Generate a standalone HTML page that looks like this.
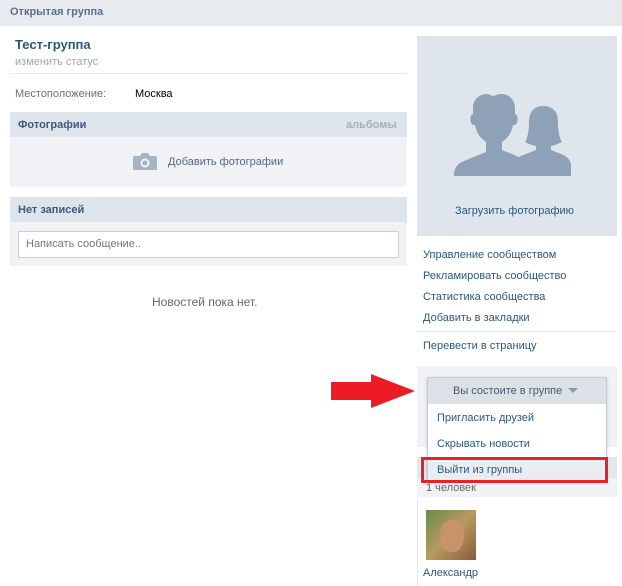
<!DOCTYPE html>
<html><head><meta charset="utf-8"><style>
*{margin:0;padding:0;box-sizing:border-box}
body{width:622px;height:586px;background:#fff;font-family:"Liberation Sans","DejaVu Sans",sans-serif;font-size:11px;color:#000;position:relative;overflow:hidden}
.a{position:absolute;white-space:nowrap}
.lnk{color:#2b587a}
</style></head><body>
<div class="a" style="left:0;top:0;width:622px;height:26px;background:#e7ebf0"></div>
<div class="a" style="left:10px;top:6px;font-weight:bold;color:#59708a">Открытая группа</div>
<div class="a" style="left:15px;top:37px;font-size:13px;font-weight:bold;color:#2b587a">Тест-группа</div>
<div class="a" style="left:15px;top:56px;color:#a0a6ad">изменить статус</div>
<div class="a" style="left:10px;top:73px;width:397px;height:1px;background:#e5e8ec"></div>
<div class="a" style="left:15px;top:88px;color:#6b6f73">Местоположение:</div>
<div class="a" style="left:135px;top:88px;color:#000">Москва</div>
<div class="a" style="left:10px;top:112px;width:397px;height:25px;background:#dee4eb"></div>
<div class="a" style="left:18px;top:119px;font-weight:bold;color:#3d5a7a">Фотографии</div>
<div class="a" style="left:346px;top:119px;font-weight:bold;color:#a3b1c2">альбомы</div>
<div class="a" style="left:10px;top:137px;width:397px;height:50px;background:#f0f2f5"></div>
<svg class="a" style="left:133px;top:152px" width="24" height="20" viewBox="0 0 24 20"><path d="M2 4h5l2-3h6l2 3h5a2 2 0 0 1 2 2v12H0V6a2 2 0 0 1 2-2z" fill="#a7b4c3"/><circle cx="12" cy="11" r="4.5" fill="#f0f2f5"/><circle cx="12" cy="11" r="2.5" fill="#a7b4c3"/></svg>
<div class="a" style="left:168px;top:156px;color:#55677d">Добавить фотографии</div>
<div class="a" style="left:10px;top:197px;width:397px;height:25px;background:#dee4eb"></div>
<div class="a" style="left:18px;top:204px;font-weight:bold;color:#3d5a7a">Нет записей</div>
<div class="a" style="left:10px;top:222px;width:397px;height:44px;background:#f0f2f5"></div>
<div class="a" style="left:18px;top:231px;width:381px;height:27px;background:#fff;border:1px solid #c9d0d8"></div>
<div class="a" style="left:26px;top:238px;color:#777">Написать сообщение..</div>
<div class="a" style="left:152px;top:295px;font-size:12px;color:#666">Новостей пока нет.</div>

<div class="a" style="left:417px;top:36px;width:200px;height:200px;background:#dfe5ec"></div>
<svg class="a" style="left:454px;top:94px" width="126" height="82" viewBox="0 0 126 82"><path d="M0 82c0-8 3-12 10-15l22-9v-10c-6-4-10-10-11-17h-2c-3-1-4-10 0-11v-6c0-9 7-14 14-14 3 0 4 2 7 2 2-1 4-2 8-2 7 0 13 6 13 14v6c4 1 3 10 0 11h-2c-1 7-5 13-11 17v8c6 3 12 4 18 8v18z" fill="#8ea1b6"/><path d="M60 82v-14c2-4 6-6 12-8l10-4v-4c-5-1-9-3-11-4 3-5 4-12 4-20 0-11 6-16 14-16 9 0 15 5 15 16 0 8 1 15 4 20-2 1-6 3-11 4v4l10 4c6 2 9 6 10 10v12z" fill="#8ea1b6"/></svg>
<div class="a" style="left:455px;top:205px;color:#2b587a">Загрузить фотографию</div>
<div class="a lnk" style="left:423px;top:249px">Управление сообществом</div>
<div class="a lnk" style="left:423px;top:270px">Рекламировать сообщество</div>
<div class="a lnk" style="left:423px;top:291px">Статистика сообщества</div>
<div class="a lnk" style="left:423px;top:312px">Добавить в закладки</div>
<div class="a" style="left:417px;top:331px;width:200px;height:1px;background:#e5e8ec"></div>
<div class="a lnk" style="left:423px;top:340px">Перевести в страницу</div>
<div class="a" style="left:417px;top:366px;width:200px;height:81px;background:#f0f2f5"></div>
<div class="a" style="left:417px;top:457px;width:200px;height:21px;background:#e2e8ee"></div>
<div class="a" style="left:417px;top:478px;width:200px;height:19px;background:#f0f2f5"></div>
<div class="a" style="left:426px;top:482px;color:#666">1 человек</div>
<div class="a" style="left:417px;top:497px;width:1px;height:89px;background:#e5e8ec"></div>
<div class="a" style="left:427px;top:377px;width:180px;height:103px;background:#fff;border:1px solid #c5ccd5;box-shadow:0 1px 3px rgba(0,0,0,.2)"></div>
<div class="a" style="left:428px;top:378px;width:178px;height:26px;background:#dce1e8"></div>
<div class="a" style="left:453px;top:385px;color:#45586e">Вы состоите в группе</div>
<div class="a" style="left:568px;top:388px;width:0;height:0;border-left:5px solid transparent;border-right:5px solid transparent;border-top:5px solid #8c9aab"></div>
<div class="a lnk" style="left:437px;top:412px">Пригласить друзей</div>
<div class="a lnk" style="left:437px;top:438px">Скрывать новости</div>
<div class="a" style="left:428px;top:458px;width:178px;height:22px;background:#e9edf2"></div>
<div class="a lnk" style="left:437px;top:464px">Выйти из группы</div>
<div class="a" style="left:421px;top:457px;width:187px;height:26px;border:3px solid #e8202a"></div>
<svg class="a" style="left:329px;top:374px" width="88" height="34" viewBox="0 0 88 34"><path d="M2 8h40V0l44 17-44 17V26H2z" fill="#ed1c24"/></svg>
<div class="a" style="left:426px;top:510px;width:50px;height:50px;background:linear-gradient(135deg,#6a8a4a,#b89a60 50%,#8a5a3a)"></div>
<div class="a" style="left:440px;top:520px;width:24px;height:32px;border-radius:45%;background:#c8926a"></div>
<div class="a lnk" style="left:423px;top:567px">Александр</div>
</body></html>
